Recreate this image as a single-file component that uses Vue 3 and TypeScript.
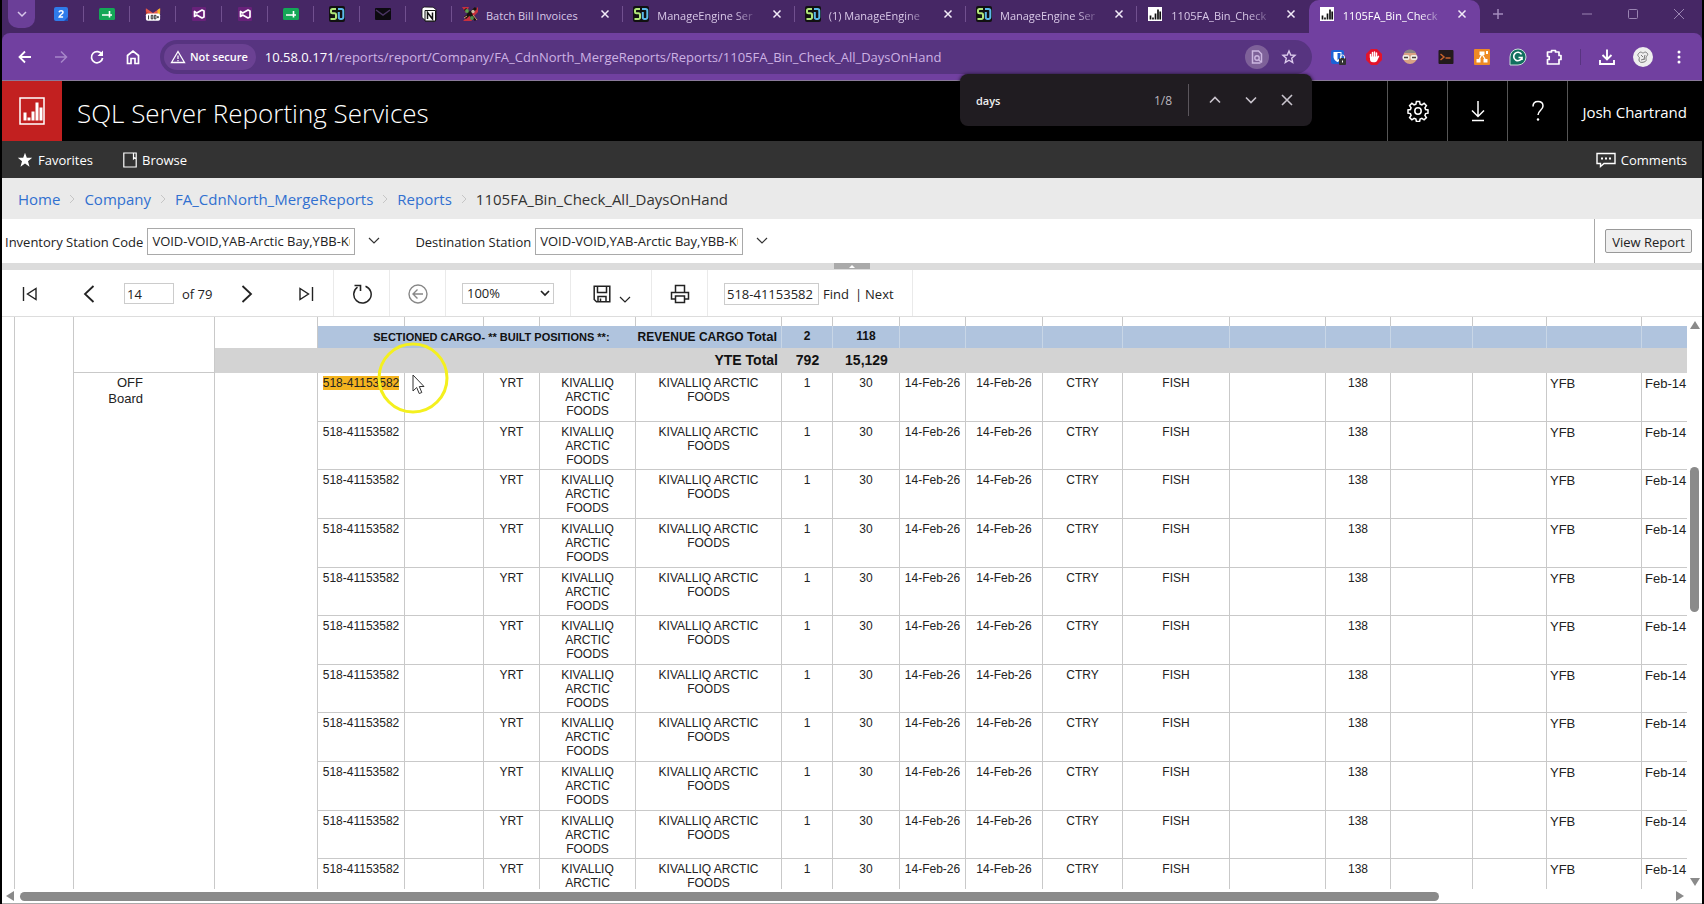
<script setup lang="ts">
import { ref } from 'vue'

type Icon = 'calendar' | 'sheet' | 'mail' | 'studio' | 'sdp' | 'envelope' | 'notion' | 'batch' | 'chart'

interface Tab {
  icon: Icon
  title: string
}

const pinned: Icon[] = ['calendar', 'sheet', 'mail', 'studio', 'studio', 'sheet', 'sdp', 'envelope', 'notion']

const tabs: Tab[] = [
  { icon: 'batch', title: 'Batch Bill Invoices' },
  { icon: 'sdp', title: 'ManageEngine Ser' },
  { icon: 'sdp', title: '(1) ManageEngine' },
  { icon: 'sdp', title: 'ManageEngine Ser' },
  { icon: 'chart', title: '1105FA_Bin_Check' },
  { icon: 'chart', title: '1105FA_Bin_Check' },
]
const activeTab = tabs.length - 1

const crumbs = ['Home', 'Company', 'FA_CdnNorth_MergeReports', 'Reports']

const stations = 'VOID-VOID,YAB-Arctic Bay,YBB-Kugaaruk'
const inventory = ref(stations)
const destination = ref(stations)
const page = ref('14')
const zoom = ref('100%')
const searchText = ref('518-41153582')
const findText = ref('days')

const columns = [13, 59, 141, 103, 87, 79, 56, 96, 146, 51, 67, 66, 77, 80, 107, 96, 65, 82, 74, 95, 90]

interface Shipment {
  awb: string
  origin: string
  shipper: string
  consignee: string
  pieces: number
  weight: number
  received: string
  due: string
  kind: string
  goods: string
  days: number
  station: string
  date: string
}

const shipments: Shipment[] = Array.from({ length: 11 }, () => ({
  awb: '518-41153582',
  origin: 'YRT',
  shipper: 'KIVALLIQ ARCTIC FOODS',
  consignee: 'KIVALLIQ ARCTIC FOODS',
  pieces: 1,
  weight: 30,
  received: '14-Feb-26',
  due: '14-Feb-26',
  kind: 'CTRY',
  goods: 'FISH',
  days: 138,
  station: 'YFB',
  date: 'Feb-14',
}))
</script>

<template>
  <div class="window">
    <svg class="defs" width="0" height="0" aria-hidden="true">
      <symbol id="i-calendar" viewBox="0 0 16 16">
        <rect x="1" y="1" width="14" height="14" rx="2" fill="#2f7bea" />
        <path d="M11 15h4v-4z" fill="#1c4fb5" />
        <path d="M6 6.200c.3-1 1-1.400 2-1.400 1.200 0 2 .6 2 1.600 0 1.600-3.600 2.600-3.900 4.700h4" fill="none" stroke="#fff" stroke-width="1.500" />
      </symbol>
      <symbol id="i-sheet" viewBox="0 0 16 16">
        <rect x="0" y="2" width="16" height="12" rx="1.500" fill="#14a757" />
        <path d="M3 9h10M10.500 5v6.500" fill="none" stroke="#fff" stroke-width="1.600" />
      </symbol>
      <symbol id="i-mail" viewBox="0 0 18 16">
        <path d="M1 3v5h3V5z" fill="#c5402f" /><path d="M1 1.500 9 7l8-5.500V5L9 10.500 1 5z" fill="#e8584a" />
        <path d="M14 3.500 17 1.500V8h-3z" fill="#f2b92e" />
        <rect x="1" y="7.500" width="16" height="8" rx="2" fill="#fff" />
        <path d="M4 9.500v4.500M7 9.500h1.800v4H7zM10.500 9.500h1.800v4h-1.800zM13.300 11.500h2.400M14.500 10.300v2.400" fill="none" stroke="#222" stroke-width="1" />
      </symbol>
      <symbol id="i-studio" viewBox="0 0 16 16">
        <rect x="1" y="1" width="14" height="14" rx="1" fill="#68217a" />
        <path d="M3.500 5.500v5l2.200-1.500 5.300 3 2-1v-6l-2-1-5.300 3z" fill="none" stroke="#fff" stroke-width="1.700" stroke-linejoin="round" />
        <path d="m10.500 6-3 2 3 2z" fill="#68217a" />
      </symbol>
      <symbol id="i-sdp" viewBox="0 0 16 16">
        <rect width="16" height="16" rx="2" fill="#111" />
        <path d="M7 3H3.500A1.500 1.500 0 0 0 2 4.500v1.300a1.500 1.500 0 0 0 1.500 1.500h2A1.500 1.500 0 0 1 7 8.800v2.700A1.500 1.500 0 0 1 5.500 13H1.500" fill="none" stroke="#b0e678" stroke-width="2" />
        <path d="M9 3h3.500A1.800 1.800 0 0 1 14.300 4.800v6.400a1.800 1.800 0 0 1-1.800 1.800h-1.200A1.500 1.500 0 0 1 9.800 11.500V6" fill="none" stroke="#5bb9e8" stroke-width="2" />
      </symbol>
      <symbol id="i-envelope" viewBox="0 0 16 16">
        <rect y="2" width="16" height="12" rx="1" fill="#0c0a10" />
        <path d="m1 4 7 5 7-5" fill="none" stroke="#4a3563" stroke-width="1.500" />
      </symbol>
      <symbol id="i-notion" viewBox="0 0 16 16">
        <path d="M1 2.500 3 1l9 .2 3 2.300V14l-1.500 1.500L5 15.200 1 11.500z" fill="#fff" stroke="#111" stroke-width=".8" />
        <path d="M4 4.500h10.500V15H4z" fill="#fff" stroke="#111" />
        <path d="M6.500 13V6.500l5 6.500V6.500" fill="none" stroke="#111" stroke-width="1.500" />
      </symbol>
      <symbol id="i-batch" viewBox="0 0 16 16">
        <path d="M0 1h7l-3 6zM9 7l7-6v5l-5 5zM1 15l6-6 3 6z" fill="#c9303e" />
        <path d="M3 3l11 11M14 2 3 12" stroke="#18140f" stroke-width="3" />
        <circle cx="5" cy="5" r="1.900" fill="#5f9e52" /><circle cx="11" cy="5.500" r="1.700" fill="#d0b9a6" /><circle cx="10" cy="12" r="1.900" fill="#4e8d4b" /><path d="m2 12 3-2M11 9l4 5" stroke="#d99a76" />
      </symbol>
      <symbol id="i-chart" viewBox="0 0 16 16">
        <rect x="1" y="1" width="14" height="14" fill="#fff" />
        <path d="M3.500 13.500v-4M6 13.500v-2M8.500 13.500v-6M11 13.500v-10M13.200 13.500v-8" stroke="#111" stroke-width="1.700" />
      </symbol>
    </svg>

    <header class="browser">
      <div class="tabstrip">
        <button class="tab-search" aria-label="Search tabs">
          <svg width="12" height="12" viewBox="0 0 12 12"><path d="m2 4 4 4 4-4" fill="none" stroke="#d7c6ea" stroke-width="1.500" /></svg>
        </button>
        <div class="pins">
          <button v-for="(icon, i) in pinned" :key="i" class="pin" aria-label="Pinned tab">
            <svg width="16" height="16"><use :href="'#i-' + icon" /></svg>
          </button>
        </div>
        <div class="tabs">
          <div v-for="(tab, i) in tabs" :key="i" class="tab" :class="{ active: i === activeTab }">
            <svg class="tab-icon" width="16" height="16"><use :href="'#i-' + tab.icon" /></svg>
            <span class="tab-title" :class="{ fade: i > 0 }">{{ tab.title }}</span>
            <button class="tab-close" aria-label="Close tab">
              <svg width="10" height="10" viewBox="0 0 10 10"><path d="m1.500 1.500 7 7m0-7-7 7" stroke="#f2ebf8" stroke-width="1.500" /></svg>
            </button>
          </div>
        </div>
        <button class="new-tab" aria-label="New tab">
          <svg width="12" height="12" viewBox="0 0 12 12"><path d="M6 1v10M1 6h10" stroke="#a48cbd" stroke-width="1.500" /></svg>
        </button>
        <div class="controls">
          <button aria-label="Minimize"><svg width="12" height="12" viewBox="0 0 12 12"><path d="M1 6h10" stroke="#9a84b2" /></svg></button>
          <button aria-label="Maximize"><svg width="12" height="12" viewBox="0 0 12 12"><rect x="1.500" y="1.500" width="9" height="9" rx="1" fill="none" stroke="#9a84b2" /></svg></button>
          <button aria-label="Close"><svg width="12" height="12" viewBox="0 0 12 12"><path d="m1 1 10 10M11 1 1 11" stroke="#9a84b2" /></svg></button>
        </div>
      </div>

      <div class="addressbar">
        <div class="nav">
          <button aria-label="Back"><svg width="16" height="16" viewBox="0 0 16 16"><path d="M14 8H3m5-5.500L2.500 8 8 13.500" fill="none" stroke="#fff" stroke-width="1.800" /></svg></button>
          <button aria-label="Forward"><svg width="16" height="16" viewBox="0 0 16 16"><path d="M2 8h11M8 2.500 13.500 8 8 13.500" fill="none" stroke="#a785c9" stroke-width="1.500" /></svg></button>
          <button aria-label="Reload"><svg width="16" height="16" viewBox="0 0 16 16"><path d="M13 5.500A5.600 5.600 0 1 0 13.600 9" fill="none" stroke="#fff" stroke-width="1.700" /><path d="M14 1.500V7H8.500z" fill="#fff" /></svg></button>
          <button aria-label="Home"><svg width="16" height="16" viewBox="0 0 16 16"><path d="M2.500 6.500 8 2l5.500 4.500V14.500H10V9.500H6v5H2.500z" fill="none" stroke="#fff" stroke-width="1.700" /></svg></button>
        </div>
        <div class="omnibox">
          <button class="chip">
            <svg width="16" height="16" viewBox="0 0 16 16"><path d="M8 2.500 14.500 13.500h-13zM8 6.500v3.500M8 11v1.300" fill="none" stroke="#fff" stroke-width="1.300" /></svg>
            Not secure
          </button>
          <span class="url"><b>10.58.0.171</b>/reports/report/Company/FA_CdnNorth_MergeReports/Reports/1105FA_Bin_Check_All_DaysOnHand</span>
          <button class="page-find" aria-label="Find in page"><svg width="16" height="16" viewBox="0 0 16 16"><path d="M12.500 13.500V5L9.500 2h-6v12h8" fill="none" stroke="#ccb6e0" stroke-width="1.500" /><circle cx="8" cy="9" r="2.200" fill="none" stroke="#ccb6e0" stroke-width="1.400" /><path d="m9.500 10.500 3 3" stroke="#ccb6e0" stroke-width="1.400" /></svg></button>
          <button class="star" aria-label="Bookmark"><svg width="16" height="16" viewBox="0 0 16 16"><path d="m8 2 1.700 4 4.300.4-3.300 2.800 1 4.300L8 11.200l-3.700 2.300 1-4.300L2 6.400 6.300 6z" fill="none" stroke="#dccbec" stroke-width="1.400" /></svg></button>
        </div>
        <div class="extensions">
          <button aria-label="Password manager"><svg width="18" height="18" viewBox="0 0 18 18"><rect x="2" y="2" width="13" height="14" rx="2" fill="#1c62d6" /><path d="M4.500 4h8v5c0 3-4 5-4 5s-4-2-4-5z" fill="#fff" /><path d="M8.500 5v7c1.500-1 3-2 3-4V5z" fill="#1c62d6" /><rect x="10" y="10" width="7" height="7" rx="1" fill="#333" /><path d="M11.500 10.500V9a2 2 0 0 1 4 0v1.500" fill="none" stroke="#eee" /><path d="M13.500 12.500v2" stroke="#fff" /></svg></button>
          <button aria-label="Ad blocker"><svg width="18" height="18" viewBox="0 0 18 18"><path d="M6 1h6l5 5v6l-5 5H6l-5-5V6z" fill="#e3132b" /><path d="M5.500 9.500V6.500M7.500 9V4.500M9.500 9V4M11.500 9.500V5" stroke="#fff" stroke-width="1.500" stroke-linecap="round" /><path d="M5 8.500h7.200l1.500-1 .6.800-2.300 4.700a2.500 2.500 0 0 1-2 1.200H8a3 3 0 0 1-3-3z" fill="#fff" /></svg></button>
          <button aria-label="Reader"><svg width="18" height="18" viewBox="0 0 18 18"><circle cx="9" cy="9" r="7" fill="#d9a184" /><path d="M3 5a7 7 0 0 1 12 0z" fill="#8b8583" /><rect x="1.500" y="7" width="7" height="5" rx="2" fill="#f2eee4" /><rect x="9.500" y="7" width="7" height="5" rx="2" fill="#f2eee4" /><path d="M3 9.500h4M11 9.500h4" stroke="#4e4540" stroke-width="1.500" /></svg></button>
          <button aria-label="Console"><svg width="18" height="18" viewBox="0 0 18 18"><rect x="1.500" y="2" width="15" height="14" rx="1" fill="#231b1c" /><path d="m3.500 6 3.500 3-3.500 3M8.500 10h5" fill="none" stroke="#c8632c" stroke-width="1.500" /></svg></button>
          <button aria-label="Diagrams"><svg width="18" height="18" viewBox="0 0 18 18"><rect x="1" y="1" width="16" height="16" rx="1" fill="#ee8a25" /><path d="m9 6-3 6M9 6l3.500 6" stroke="#fff" stroke-width="1.300" /><path d="M6.500 3.500h5v3.500h-5zM3.500 11h4v3.500h-4zM10.500 11h4v3.500h-4zM13 3h2v3h-2z" fill="#fff" /></svg></button>
          <button aria-label="Grammar"><svg width="18" height="18" viewBox="0 0 18 18"><path d="M1 17V9a8 8 0 1 1 8 8z" fill="#12705f" stroke="#c9ddd8" /><path d="M12.500 6.300A4.200 4.200 0 1 0 13 9.500H9.500M13 9.500V12" fill="none" stroke="#fff" stroke-width="1.600" /></svg></button>
          <button aria-label="Extensions"><svg width="18" height="18" viewBox="0 0 18 18"><path d="M2.500 4h4V2.500h4V4H14v3.500h2v4h-2V16H2.500v-4.500h1.700v-3H2.500z" fill="none" stroke="#fff" stroke-width="1.700" stroke-linejoin="round" /></svg></button>
          <span class="ext-divider"></span>
          <button aria-label="Downloads"><svg width="18" height="18" viewBox="0 0 18 18"><path d="M9 1.500v10M4.500 7 9 11.500 13.500 7M2 12v4h14v-4" fill="none" stroke="#fff" stroke-width="1.900" /></svg></button>
          <button aria-label="Profile"><svg width="20" height="20" viewBox="0 0 20 20"><circle cx="10" cy="10" r="10" fill="#eee" /><path d="M6 6c2-2 3 0 4 0s2-2 4 0-1 3-1 5 1 3-2 4-5 0-5-2 1-2 0-3-2-2 0-4zM8 8l2 2M12 8l-1 4M8 13l4-1" fill="none" stroke="#777" /></svg></button>
          <button aria-label="Menu"><svg width="18" height="18" viewBox="0 0 18 18"><circle cx="9" cy="4" r="1.500" fill="#fff" /><circle cx="9" cy="9" r="1.500" fill="#fff" /><circle cx="9" cy="14" r="1.500" fill="#fff" /></svg></button>
        </div>
      </div>

      <div class="findbar">
        <input v-model="findText" aria-label="Find in page" />
        <span class="count">1/8</span>
        <span class="find-divider"></span>
        <button aria-label="Previous match"><svg width="14" height="14" viewBox="0 0 14 14"><path d="m2 9.500 5-5 5 5" fill="none" stroke="#c9c4cd" stroke-width="1.600" /></svg></button>
        <button aria-label="Next match"><svg width="14" height="14" viewBox="0 0 14 14"><path d="m2 4.500 5 5 5-5" fill="none" stroke="#c9c4cd" stroke-width="1.600" /></svg></button>
        <button aria-label="Close find bar"><svg width="14" height="14" viewBox="0 0 14 14"><path d="m2 2 10 10M12 2 2 12" stroke="#c9c4cd" stroke-width="1.600" /></svg></button>
      </div>
    </header>

    <section class="app-header">
      <a class="logo" href="#" aria-label="Home">
        <svg width="26" height="28" viewBox="0 0 26 28"><rect x="1" y="1" width="24" height="26" fill="none" stroke="#fff" stroke-width="1.500" /><path d="M6 23.500v-8M10 23.500v-3M14 23.500v-9M18 23.500V5.500M22 23.500v-13" stroke="#fff" stroke-width="3" /></svg>
      </a>
      <h1>SQL Server Reporting Services</h1>
      <button class="head-cell" aria-label="Settings">
        <svg width="22" height="22" viewBox="0 0 22 22" fill="none" stroke="#fff" stroke-width="1.500"><circle cx="11" cy="11" r="3.200" /><path d="M9.400 1.500h3.200l.5 2.600 1.800.7 2.200-1.500 2.300 2.300-1.500 2.200.7 1.800 2.400.4v3.200l-2.400.4-.7 1.800 1.500 2.200-2.300 2.300-2.200-1.500-1.800.7-.5 2.400H9.400l-.5-2.400-1.800-.7-2.200 1.500-2.300-2.300 1.500-2.200-.7-1.800L1 13.200V10l2.400-.4.7-1.800-1.500-2.200 2.300-2.300 2.200 1.500 1.800-.7z" /></svg>
      </button>
      <button class="head-cell" aria-label="Download">
        <svg width="16" height="22" viewBox="0 0 16 22"><path d="M8 1v15M2 10.500l6 6 6-6M2 20.500h12" fill="none" stroke="#fff" stroke-width="1.500" /></svg>
      </button>
      <button class="head-cell" aria-label="Help">
        <svg width="14" height="22" viewBox="0 0 14 22"><path d="M2 6.500C2 3 4 1.500 7 1.500s5 1.700 5 4.500c0 4-5 4.500-5 9" fill="none" stroke="#fff" stroke-width="1.500" /><circle cx="7" cy="19.500" r="1.200" fill="#fff" /></svg>
      </button>
      <button class="user">Josh Chartrand</button>
    </section>

    <nav class="menu">
      <a href="#"><svg width="16" height="16" viewBox="0 0 16 16"><path d="m8 .8 1.800 5h5.400L11 9.200l1.500 5.600L8 11.500l-4.500 3.300L5 9.200.8 5.800h5.400z" fill="#fff" /></svg>Favorites</a>
      <a href="#" class="browse"><svg width="14" height="16" viewBox="0 0 14 16"><path d="M.8 1h12.400v14H.8zM10.500 1v6l1.300-1.200L13.200 7" fill="none" stroke="#fff" stroke-width="1.200" /></svg>Browse</a>
      <a href="#" class="comments"><svg width="20" height="16" viewBox="0 0 20 16"><path d="M1 1.500h18v10H8l-3.500 3v-3H1z" fill="none" stroke="#fff" stroke-width="1.400" /><path d="M5 6.500h2M9 6.500h2M13 6.500h2" stroke="#fff" stroke-width="2" /></svg>Comments</a>
    </nav>

    <nav class="crumbs" aria-label="Breadcrumb">
      <template v-for="crumb in crumbs" :key="crumb">
        <a href="#">{{ crumb }}</a>
        <svg width="6" height="10" viewBox="0 0 6 10"><path d="m1 1 4 4-4 4" fill="none" stroke="#c6c6c6" /></svg>
      </template>
      <span>1105FA_Bin_Check_All_DaysOnHand</span>
    </nav>

    <form class="params" @submit.prevent>
      <label for="inventory">Inventory Station Code</label>
      <input id="inventory" v-model="inventory" />
      <button class="drop" type="button" aria-label="Open inventory stations"><svg width="12" height="8" viewBox="0 0 12 8"><path d="m1 1 5 5 5-5" fill="none" stroke="#333" stroke-width="1.200" /></svg></button>
      <label for="destination" class="second">Destination Station</label>
      <input id="destination" v-model="destination" />
      <button class="drop" type="button" aria-label="Open destination stations"><svg width="12" height="8" viewBox="0 0 12 8"><path d="m1 1 5 5 5-5" fill="none" stroke="#333" stroke-width="1.200" /></svg></button>
      <div class="submit"><button type="submit">View Report</button></div>
    </form>

    <div class="splitter"><button aria-label="Collapse parameters"><svg width="6" height="3" viewBox="0 0 6 3"><path d="M0 3 3 0l3 3z" fill="#fff" /></svg></button></div>

    <div class="toolbar">
      <div class="group pager">
        <button class="first" aria-label="First page"><svg width="16" height="16" viewBox="0 0 16 16"><path d="M1.500 1v14M14 2.500v11L5.500 8z" fill="none" stroke="#222" stroke-width="1.400" /></svg></button>
        <button aria-label="Previous page"><svg width="12" height="18" viewBox="0 0 12 18"><path d="m10.500 1-8.500 8 8.500 8" fill="none" stroke="#222" stroke-width="1.800" /></svg></button>
        <span class="page-box"><input id="page" v-model="page" /><label for="page">of 79</label></span>
        <button aria-label="Next page"><svg width="12" height="18" viewBox="0 0 12 18"><path d="m1.500 1 8.500 8-8.500 8" fill="none" stroke="#222" stroke-width="1.800" /></svg></button>
        <button class="last" aria-label="Last page"><svg width="16" height="16" viewBox="0 0 16 16"><path d="M14.500 1v14M2 2.500v11L10.500 8z" fill="none" stroke="#222" stroke-width="1.400" /></svg></button>
      </div>
      <div class="group icon">
        <button aria-label="Refresh"><svg width="20" height="20" viewBox="0 0 20 20"><path d="M13.500 2.200A8.700 8.700 0 1 1 5.500 3.200" fill="none" stroke="#222" stroke-width="1.500" /><path d="M2.500 1.500h6v5.500" fill="none" stroke="#222" stroke-width="1.600" /></svg></button>
      </div>
      <div class="group icon">
        <button aria-label="Back to parent report"><svg width="20" height="20" viewBox="0 0 20 20"><circle cx="10" cy="10" r="9" fill="none" stroke="#888" stroke-width="1.400" /><path d="M15 10H5.500M9.500 5.500 5 10l4.500 4.500" fill="none" stroke="#888" stroke-width="1.400" /></svg></button>
      </div>
      <div class="group zoom">
        <select v-model="zoom" aria-label="Zoom">
          <option>100%</option>
          <option>200%</option>
        </select>
        <svg class="caret" width="10" height="7" viewBox="0 0 10 7"><path d="m1 1 4 4 4-4" fill="none" stroke="#222" stroke-width="1.700" /></svg>
      </div>
      <div class="group export">
        <button aria-label="Export"><svg width="18" height="18" viewBox="0 0 18 18"><path d="M1.200 1.200h15.600v15.600H3.500l-2.300-2.300zM4.500 1.200v6.300h9V1.200M5 16.500v-5h8v5M7.500 13.500v3" fill="none" stroke="#222" stroke-width="1.500" /></svg><svg class="export-caret" width="12" height="7" viewBox="0 0 12 7"><path d="m1 1 5 5 5-5" fill="none" stroke="#222" stroke-width="1.200" /></svg></button>
      </div>
      <div class="group icon">
        <button aria-label="Print"><svg width="20" height="20" viewBox="0 0 20 20"><path d="M5.500 8.500v-7h9v7M5 15H1.500V8.500h17V15H15M5.500 12h9v6.500h-9z" fill="none" stroke="#222" stroke-width="1.500" /></svg></button>
      </div>
      <div class="group search">
        <input v-model="searchText" aria-label="Find text in report" />
        <button>Find</button><span class="bar">|</span><button>Next</button>
      </div>
    </div>

    <main class="report">
      <div class="viewport">
        <table>
          <colgroup><col v-for="(w, i) in columns" :key="i" :style="{ width: w + 'px' }" /></colgroup>
          <tbody>
            <tr class="stub">
              <td rowspan="14"></td>
              <td rowspan="14"></td>
              <td rowspan="3" class="ruled"></td>
              <td rowspan="2"></td>
              <td v-for="n in 17" :key="n"></td>
            </tr>
            <tr class="section-total">
              <td colspan="5" class="label"><small>SECTIONED CARGO- ** BUILT POSITIONS **:</small><span class="revenue">REVENUE CARGO <span class="word">Total</span></span></td>
              <td>2</td>
              <td>118</td>
              <td v-for="n in 10" :key="n"></td>
            </tr>
            <tr class="station-total">
              <td colspan="6" class="label">YTE Total</td>
              <td>792</td>
              <td>15,129</td>
              <td colspan="10"></td>
            </tr>
            <tr v-for="(s, i) in shipments" :key="i" class="shipment">
              <td v-if="i === 0" :rowspan="shipments.length" class="board">OFF<br />Board</td>
              <td v-if="i === 0" :rowspan="shipments.length"></td>
              <td><mark v-if="i === 0">{{ s.awb }}</mark><template v-else>{{ s.awb }}</template></td>
              <td></td>
              <td>{{ s.origin }}</td>
              <td class="shipper">{{ s.shipper }}</td>
              <td class="consignee">{{ s.consignee }}</td>
              <td>{{ s.pieces }}</td>
              <td>{{ s.weight }}</td>
              <td>{{ s.received }}</td>
              <td>{{ s.due }}</td>
              <td>{{ s.kind }}</td>
              <td>{{ s.goods }}</td>
              <td></td>
              <td>{{ s.days }}</td>
              <td></td>
              <td></td>
              <td class="wide">{{ s.station }}</td>
              <td class="wide">{{ s.date }}</td>
            </tr>
          </tbody>
        </table>
      </div>
      <div class="vscroll">
        <svg width="10" height="8" viewBox="0 0 10 8"><path d="M5 0 10 8H0z" fill="#8a8a8a" /></svg>
        <span class="track"><span class="before"></span><span class="thumb"></span><span class="after"></span></span>
        <svg width="10" height="8" viewBox="0 0 10 8"><path d="M0 0h10L5 8z" fill="#8a8a8a" /></svg>
      </div>
      <svg class="pointer" width="74" height="74" viewBox="0 0 74 74">
        <circle cx="37" cy="37" r="34" fill="none" stroke="#f4f01e" stroke-width="3" />
        <path d="M37 34v16l3.700-3.500 2.500 6 2.600-1-2.500-6H48z" fill="#fff" stroke="#333" />
      </svg>
    </main>
    <div class="hscroll">
      <svg width="8" height="10" viewBox="0 0 8 10"><path d="M8 0v10L0 5z" fill="#8a8a8a" /></svg>
      <span class="track"><span class="thumb"></span></span>
      <svg width="8" height="10" viewBox="0 0 8 10"><path d="m0 0 8 5-8 5z" fill="#8a8a8a" /></svg>
    </div>
  </div>
</template>

<style>
html,
body {
  margin: 0;
  background: #fff;
}
</style>

<style scoped>
* {
  box-sizing: border-box;
}
.window {
  display: flex;
  flex-direction: column;
  height: 100vh;
  border: solid #000;
  border-width: 0 2px;
  overflow: hidden;
  background: #fff;
  font-family: "Open Sans", "Noto Sans", sans-serif;
  font-size: 13px;
  color: #222;
}
.defs {
  position: absolute;
}
button {
  display: flex;
  align-items: center;
  justify-content: center;
  padding: 0;
  border: 0;
  background: none;
  color: inherit;
  font: inherit;
}
svg {
  flex: none;
  display: block;
}
a {
  text-decoration: none;
}
input {
  min-width: 0;
  outline: 0;
  font: inherit;
  color: inherit;
}

/* browser chrome */
.browser {
  position: relative;
  flex: none;
  background: #462765;
}
.tabstrip {
  display: flex;
  height: 33px;
}
.tab-search {
  width: 27px;
  height: 28px;
  margin-left: 6px;
  border-radius: 0 0 10px 10px;
  background: #6b3f98;
}
.pins {
  display: flex;
  margin-left: 3px;
}
.pin {
  position: relative;
  width: 46px;
  height: 28px;
}
.pin::after,
.tab::after {
  content: "";
  position: absolute;
  top: 6px;
  right: 0;
  width: 1px;
  height: 16px;
  background: #71508f;
}
.tabs {
  display: flex;
  flex: 0 1 1028px;
  min-width: 0;
}
.tab {
  position: relative;
  display: flex;
  align-items: center;
  flex: 1 1 0;
  min-width: 0;
  height: 28px;
  padding: 0 11px 0 10px;
  color: #d9c9e8;
  font-size: 11px;
}
.tab.active::after,
.tab:nth-last-child(2)::after {
  display: none;
}
.tab.active {
  height: 33px;
  padding-bottom: 5px;
  border-radius: 10px 10px 0 0;
  background: #7140a0;
  color: #fff;
}
.tab-title {
  flex: 1;
  min-width: 0;
  margin: 2px 10px 0 8px;
  overflow: hidden;
  white-space: nowrap;
}
.tab-title.fade {
  mask-image: linear-gradient(90deg, #000 75%, transparent);
}
.tab-close {
  width: 14px;
  height: 16px;
}
.new-tab {
  width: 28px;
  height: 28px;
  margin-left: 4px;
}
.controls {
  display: flex;
  margin-left: auto;
}
.controls button {
  width: 46px;
  height: 28px;
}
.addressbar {
  display: flex;
  align-items: center;
  height: 48px;
  border-bottom: 1px solid #8a7a9a;
  border-radius: 8px 8px 0 0;
  background: #7140a0;
}
.nav {
  display: flex;
  margin-left: 5px;
}
.nav button {
  width: 36px;
  height: 32px;
}
.omnibox {
  display: flex;
  align-items: center;
  flex: 1;
  min-width: 0;
  height: 34px;
  margin-left: 9px;
  padding: 0 14px 0 4px;
  border-radius: 17px;
  background: #573480;
  color: #fff;
}
.chip {
  gap: 4px;
  height: 26px;
  padding: 0 8px 0 6px;
  border-radius: 13px;
  background: #6b4193;
  font-size: 11px;
  font-weight: 600;
}
.url {
  flex: 1;
  margin-left: 9px;
  overflow: hidden;
  white-space: nowrap;
  color: #cdb2e4;
}
.url b {
  font-weight: 400;
  color: #fff;
}
.page-find {
  width: 24px;
  height: 24px;
  border-radius: 12px;
  background: #7e6199;
}
.star {
  width: 18px;
  margin-left: 11px;
}
.extensions {
  display: flex;
  align-items: center;
  width: 390px;
  padding-left: 8px;
}
.extensions button {
  width: 36px;
  height: 32px;
}
.ext-divider {
  width: 1px;
  height: 16px;
  margin: 0 8px;
  background: #583480;
}
.findbar {
  position: absolute;
  top: 74px;
  right: 390px;
  z-index: 2;
  display: flex;
  align-items: center;
  width: 352px;
  height: 52px;
  padding: 0 7px 0 14px;
  border-radius: 8px;
  background: #201c21;
  box-shadow: 0 1px 4px #000;
  color: #eee;
  font-size: 12px;
}
.findbar input {
  flex: 1;
  border: 0;
  background: none;
  font-size: 11px;
  font-weight: 600;
}
.findbar button {
  width: 36px;
  height: 32px;
}
.count {
  color: #bbb6be;
}
.find-divider {
  width: 1px;
  height: 32px;
  margin: 0 8px 0 16px;
  background: #5b565c;
}

/* reporting services header */
.app-header {
  display: flex;
  flex: none;
  height: 60px;
  background: #000;
  color: #fff;
}
.logo {
  display: flex;
  align-items: center;
  justify-content: center;
  width: 60px;
  background: #c22020;
}
h1 {
  flex: 1;
  margin: 0 0 0 15px;
  font-size: 26px;
  font-weight: 300;
  line-height: 64px;
  white-space: nowrap;
}
.head-cell {
  width: 60px;
  border-left: 1px solid #555;
}
.user {
  padding: 2px 15px 0 14px;
  border-left: 1px solid #555;
  font-size: 15px;
}
.menu {
  display: flex;
  flex: none;
  align-items: center;
  height: 37px;
  padding: 0 15px;
  background: #333;
}
.menu a {
  display: flex;
  align-items: center;
  gap: 5px;
  color: #fff;
}
.menu .browse {
  margin-left: 30px;
}
.menu .comments {
  margin-left: auto;
}
.crumbs {
  display: flex;
  flex: none;
  align-items: center;
  gap: 9px;
  height: 41px;
  padding-left: 16px;
  background: #eaeaea;
  font-size: 15px;
  color: #333;
}
.crumbs a {
  color: #3170d0;
}

/* parameters */
.params {
  display: flex;
  flex: none;
  align-items: center;
  height: 44px;
  padding-left: 3px;
}
.params label {
  margin-right: 4px;
  padding-top: 2px;
}
.params .second {
  margin-left: 28px;
}
.params input {
  width: 208px;
  height: 27px;
  padding: 0 4px;
  border: 1px solid #a9a9a9;
}
.drop {
  width: 26px;
  height: 26px;
  margin-left: 6px;
}
.submit {
  align-self: stretch;
  display: flex;
  align-items: center;
  margin-left: auto;
  padding: 0 10px;
  border-left: 1px solid #aaa;
}
.submit button {
  height: 24px;
  padding: 1px 6px 0;
  border: 1px solid #999;
  border-radius: 2px;
  background: #efefef;
}
.splitter {
  display: flex;
  flex: none;
  justify-content: center;
  height: 7px;
  background: #dcdcdc;
}
.splitter button {
  width: 36px;
  height: 6px;
  background: #aaa;
}

/* viewer toolbar */
.toolbar {
  display: flex;
  flex: none;
  height: 47px;
  border-bottom: 1px solid #ddd;
}
.group {
  display: flex;
  align-items: center;
  padding-top: 1px;
  border-right: 1px solid #eaeaea;
}
.pager {
  gap: 29px;
  width: 332px;
  padding-left: 20px;
}
.first {
  margin-right: 16px;
}
.last {
  margin-left: 16px;
}
.page-box {
  display: flex;
  align-items: center;
  gap: 8px;
}
.page-box input {
  width: 50px;
  height: 21px;
  padding: 0 2px;
  border: 1px solid #ccc;
}
.icon {
  justify-content: center;
  width: 56px;
}
.zoom {
  position: relative;
  width: 125px;
  padding-left: 16px;
}
.zoom select {
  width: 92px;
  height: 21px;
  padding: 0 4px;
  border: 1px solid #ccc;
  appearance: none;
  background: #fff;
  color: inherit;
  font: inherit;
  line-height: 19px;
}
.caret {
  position: absolute;
  right: 20px;
  pointer-events: none;
}
.export {
  width: 81px;
  padding-left: 22px;
}
.export button {
  align-items: flex-end;
  gap: 8px;
}
.search {
  padding: 1px 18px 0 16px;
}
.search input {
  width: 95px;
  height: 22px;
  margin-right: 4px;
  padding: 0 2px;
  border: 1px solid #ccc;
}
.bar {
  margin: 0 3px 0 6px;
}

/* report body */
.report {
  position: relative;
  display: flex;
  flex: 1;
  min-height: 0;
}
.viewport {
  flex: 1;
  min-width: 0;
  overflow: hidden;
}
table {
  width: 1730px;
  border-collapse: separate;
  border-spacing: 0;
  table-layout: fixed;
  font-family: "Liberation Sans", Arial, sans-serif;
  font-size: 12px;
  line-height: 14px;
  text-align: center;
  color: #222;
}
td {
  padding: 3px 2px 0;
  border-right: 1px solid #c9c9c9;
  vertical-align: top;
}
.stub {
  height: 9px;
}
.stub td {
  padding: 0;
}
.ruled,
.shipment td {
  border-bottom: 1px solid #c9c9c9;
}
.shipment {
  height: 49px;
}
.shipment:nth-child(5n),
.shipment:nth-child(5n + 3) {
  height: 48px;
}
.section-total {
  height: 22px;
  font-weight: 700;
}
.section-total td {
  border-color: #c8d6e6;
  background: #b0c4de;
}
.section-total td,
.station-total td {
  color: #111;
}
.section-total .label,
.station-total .label {
  padding-right: 4px;
  text-align: right;
}
.section-total .label {
  padding-top: 4px;
}
.section-total small {
  font-size: 11px;
}
.revenue {
  margin-left: 28px;
}
.word {
  font-size: 13px;
}
.station-total {
  height: 25px;
  font-size: 14px;
  font-weight: 700;
}
.station-total td {
  padding-top: 5px;
  border: 0;
  background: #d3d3d3;
}
.shipment .board {
  padding: 2px 71px 0 2px;
  font-size: 13px;
  line-height: 16px;
  text-align: right;
}
.shipment .shipper {
  padding: 3px 16px 0;
}
.shipment .consignee {
  padding: 3px 12px 0;
}
.shipment .wide {
  padding: 4px 0 0 3px;
  font-size: 13px;
  text-align: left;
  white-space: nowrap;
}
mark {
  background: #f4b41f;
  color: inherit;
}
.vscroll {
  display: flex;
  flex-direction: column;
  align-items: center;
  width: 15px;
  padding: 4px 0 3px;
}
.vscroll .track {
  display: flex;
  flex: 1;
  flex-direction: column;
}
.vscroll .before {
  flex: 138;
}
.vscroll .thumb {
  flex: 146;
  width: 9px;
  border-radius: 5px;
  background: #8a8a8a;
}
.vscroll .after {
  flex: 266;
}
.pointer {
  position: absolute;
  top: 24px;
  left: 374px;
}
.hscroll {
  display: flex;
  flex: none;
  align-items: center;
  gap: 6px;
  height: 15px;
  padding: 0 18px 0 4px;
  border-bottom: 1px solid #aaa;
}
.hscroll .track {
  flex: 1;
}
.hscroll .thumb {
  display: block;
  width: 86%;
  height: 9px;
  border-radius: 5px;
  background: #8a8a8a;
}
</style>
